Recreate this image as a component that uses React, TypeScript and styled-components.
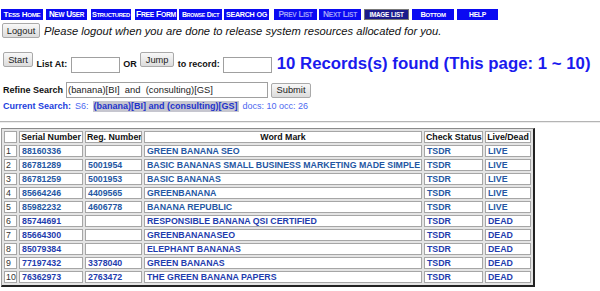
import React from 'react'
import styled, { createGlobalStyle } from 'styled-components'

const GlobalStyle = createGlobalStyle`
  body {
    margin: 0;
    background: #fff;
    font-family: 'Liberation Sans', Arial, sans-serif;
  }
`

const Page = styled.div`
  padding: 9px 0 0 0;
  width: 600px;
  overflow: hidden;
`

const Nav = styled.div`
  display: flex;
  padding-left: 1px;
  height: 11px;
`

const NavButton = styled.div<{ w: number; gap?: number; dim?: boolean; active?: boolean; size?: number }>`
  width: ${p => p.w}px;
  margin-right: ${p => p.gap ?? 3}px;
  height: 11px;
  box-sizing: border-box;
  background: ${p => (p.active ? '#1c1c8c' : '#0a0af2')};
  border: ${p => (p.active ? '1px solid #777' : 'none')};
  color: ${p => (p.dim ? '#a0a0fa' : '#fff')};
  font-weight: bold;
  font-size: ${p => p.size ?? 6.2}px;
  line-height: 11px;
  text-transform: uppercase;
  letter-spacing: -0.3px;
  display: flex;
  align-items: center;
  justify-content: center;
  gap: 2px;
  white-space: nowrap;
  overflow: hidden;
`

const NavWord = styled.span<{ big?: number }>`
  &::first-letter {
    font-size: ${p => p.big ?? 8}px;
  }
`

const LogoutRow = styled.div`
  display: flex;
  align-items: center;
  gap: 4px;
  margin-top: 3px;
  padding-left: 2px;
`

const Button = styled.button<{ w: number }>`
  width: ${p => p.w}px;
  height: 15px;
  padding: 0;
  box-sizing: border-box;
  border: 1px solid #a9a9a9;
  border-radius: 2px;
  background: linear-gradient(#f8f8f8, #dcdcdc);
  font-family: 'Liberation Sans', Arial, sans-serif;
  font-size: 9.3px;
  color: #222;
  display: flex;
  align-items: center;
  justify-content: center;
`

const Notice = styled.span`
  font-style: italic;
  font-size: 11.2px;
  color: #111;
`

const JumpRow = styled.div`
  display: flex;
  align-items: flex-start;
  gap: 3.5px;
  margin-top: 14px;
  padding-left: 3px;
  height: 23px;
`

const Label = styled.span<{ top?: number }>`
  font-weight: bold;
  font-size: 9px;
  line-height: 11px;
  color: #111;
  margin-top: ${p => p.top ?? 7}px;
  white-space: nowrap;
`

const TextBox = styled.div<{ w: number; top?: number; h?: number }>`
  width: ${p => p.w}px;
  height: ${p => p.h ?? 16}px;
  margin-top: ${p => p.top ?? 5}px;
  box-sizing: border-box;
  border: 1px solid #a0a0a0;
  background: #fff;
  font-size: 9.4px;
  line-height: 14px;
  padding-left: 1px;
  color: #222;
  white-space: pre;
`

const Found = styled.span`
  font-weight: bold;
  font-size: 16.8px;
  line-height: 20px;
  color: #1a1aee;
  white-space: nowrap;
  margin: 2px 0 0 1px;
`

const RefineRow = styled.div`
  display: flex;
  align-items: center;
  gap: 3px;
  margin-top: 7px;
  padding-left: 3px;
`

const CurrentRow = styled.div`
  display: flex;
  align-items: center;
  gap: 4px;
  margin-top: 3px;
  padding-left: 3px;
  font-size: 9px;
  line-height: 11px;
  white-space: nowrap;
`

const CurrentLabel = styled.span`
  font-weight: bold;
  color: #2240dd;
`

const Plain = styled.span`
  color: #4d68f0;
`

const Highlight = styled.span`
  font-weight: bold;
  color: #2233cc;
  background: #c6c6cf;
  padding: 0 1px;
`

const Rule = styled.div<{ top: number }>`
  margin-top: ${p => p.top}px;
  border-top: 1px solid #b4b4b4;
  border-bottom: 1px solid #ececec;
`

const Table = styled.table`
  margin: 5px 0 0 1px;
  width: 534px;
  table-layout: fixed;
  border-collapse: separate;
  border-spacing: 2px;
  border-style: solid;
  border-width: 1px 2px 2px 1px;
  border-color: #8a8a8a #222 #222 #9a9a9a;
  background: #e4e4e4;
  font-size: 8.8px;
  line-height: 10px;
`

const Th = styled.th<{ w?: number }>`
  ${p => (p.w ? `width: ${p.w}px;` : '')}
  height: 12px;
  padding: 0 1px;
  box-sizing: border-box;
  border: 1px solid #a6a6a6;
  background: #fff;
  font-weight: bold;
  color: #111;
  text-align: center;
  white-space: nowrap;
  overflow: hidden;
`

const Td = styled.td<{ link?: string }>`
  height: 12px;
  padding: 0 1px 0 2px;
  box-sizing: border-box;
  border: 1px solid #a6a6a6;
  background: #fff;
  font-weight: ${p => (p.link ? 'bold' : 'normal')};
  color: ${p => p.link ?? '#333'};
  text-align: left;
  white-space: nowrap;
  overflow: hidden;
`

const IndexTd = styled(Td)`
  padding: 0 0 0 1px;
`

type Mark = { serial: string; reg: string; mark: string; live: boolean }

const marks: Mark[] = [
  { serial: '88160336', reg: '', mark: 'GREEN BANANA SEO', live: true },
  { serial: '86781289', reg: '5001954', mark: 'BASIC BANANAS SMALL BUSINESS MARKETING MADE SIMPLE', live: true },
  { serial: '86781259', reg: '5001953', mark: 'BASIC BANANAS', live: true },
  { serial: '85664246', reg: '4409565', mark: 'GREENBANANA', live: true },
  { serial: '85982232', reg: '4606778', mark: 'BANANA REPUBLIC', live: true },
  { serial: '85744691', reg: '', mark: 'RESPONSIBLE BANANA QSI CERTIFIED', live: false },
  { serial: '85664300', reg: '', mark: 'GREENBANANASEO', live: false },
  { serial: '85079384', reg: '', mark: 'ELEPHANT BANANAS', live: false },
  { serial: '77197432', reg: '3378040', mark: 'GREEN BANANAS', live: false },
  { serial: '76362973', reg: '2763472', mark: 'THE GREEN BANANA PAPERS', live: false }
]

type NavItem = {
  label: string
  w: number
  gap?: number
  size?: number
  big?: number
  dim?: boolean
  active?: boolean
}

const navItems: NavItem[] = [
  { label: 'Tess Home', w: 42 },
  { label: 'New User', w: 41, gap: 4, size: 6.4, big: 8.2 },
  { label: 'Structured', w: 40, gap: 4, size: 5.8, big: 7.4 },
  { label: 'Free Form', w: 42, gap: 2, size: 6.8, big: 8.6 },
  { label: 'Browse Dict', w: 43, gap: 2, size: 5.2, big: 7 },
  { label: 'SEARCH OG', w: 45, gap: 5, size: 7.2, big: 7.2 },
  { label: 'Prev List', w: 43, gap: 2, dim: true, size: 6.6, big: 8.4 },
  { label: 'Next List', w: 42, gap: 3, dim: true, size: 6.6, big: 8.4 },
  { label: 'IMAGE LIST', w: 45, gap: 3, active: true, size: 6.4, big: 6.4 },
  { label: 'Bottom', w: 42, gap: 3, size: 6, big: 7.6 },
  { label: 'HELP', w: 41, size: 6.8, big: 6.8 }
]

const App = () => {
  return (
    <Page>
      <GlobalStyle />
      <Nav>
        {navItems.map(item => (
          <NavButton key={item.label} w={item.w} gap={item.gap} dim={item.dim} active={item.active} size={item.size}>
            {item.label.split(' ').map(word => (
              <NavWord key={word} big={item.big}>
                {word}
              </NavWord>
            ))}
          </NavButton>
        ))}
      </Nav>

      <LogoutRow>
        <Button w={38}>Logout</Button>
        <Notice>Please logout when you are done to release system resources allocated for you.</Notice>
      </LogoutRow>

      <JumpRow>
        <Button w={30}>Start</Button>
        <Label>List At:</Label>
        <TextBox w={49} />
        <Label>OR</Label>
        <Button w={34}>Jump</Button>
        <Label>to record:</Label>
        <TextBox w={49} />
        <Found>10 Records(s) found (This page: 1 ~ 10)</Found>
      </JumpRow>

      <RefineRow>
        <Label top={0}>Refine Search</Label>
        <TextBox w={202} top={0}>{'(banana)[BI]  and  (consulting)[GS]'}</TextBox>
        <Button w={40}>Submit</Button>
      </RefineRow>

      <CurrentRow>
        <CurrentLabel>Current Search:</CurrentLabel>
        <Plain>S6:</Plain>
        <Highlight>(banana)[BI] and (consulting)[GS]</Highlight>
        <Plain>docs: 10 occ: 26</Plain>
      </CurrentRow>

      <Rule top={9} />

      <Table>
        <thead>
          <tr>
            <Th w={13}></Th>
            <Th w={64}>Serial Number</Th>
            <Th w={57}>Reg. Number</Th>
            <Th>Word Mark</Th>
            <Th w={59}>Check Status</Th>
            <Th w={46}>Live/Dead</Th>
          </tr>
        </thead>
        <tbody>
          {marks.map((m, i) => {
            const link = m.live ? '#2457a3' : '#1e3cae'
            return (
              <tr key={m.serial}>
                <IndexTd>{i + 1}</IndexTd>
                <Td link={link}>{m.serial}</Td>
                <Td link={link}>{m.reg}</Td>
                <Td link={link}>{m.mark}</Td>
                <Td link={link}>TSDR</Td>
                <Td link={link}>{m.live ? 'LIVE' : 'DEAD'}</Td>
              </tr>
            )
          })}
        </tbody>
      </Table>

      <Rule top={5} />
    </Page>
  )
}

export default App
